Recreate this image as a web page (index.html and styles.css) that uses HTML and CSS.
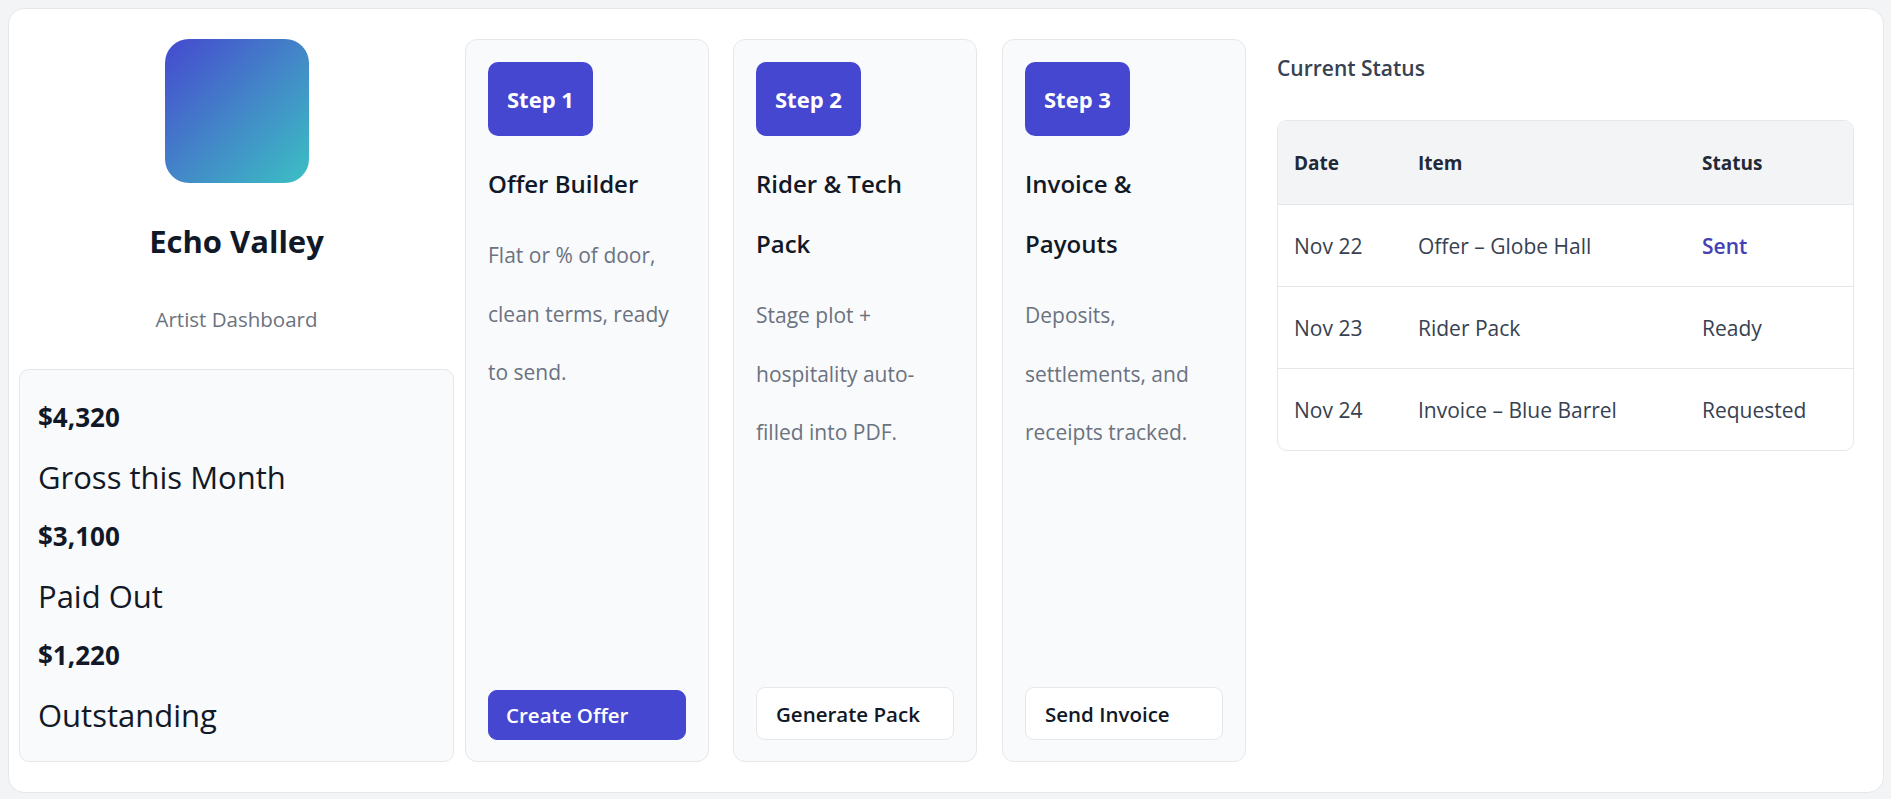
FILE: index.html
```html
<!DOCTYPE html>
<html lang="en">
<head>
<meta charset="utf-8">
<title>Echo Valley – Artist Dashboard</title>
<link rel="stylesheet" href="styles.css">
</head>
<body>
<main class="shell">
  <aside class="sidebar">
    <div class="logo"></div>
    <h1 class="artist">Echo Valley</h1>
    <p class="subtitle">Artist Dashboard</p>
    <div class="stats">
      <div class="stat-value">$4,320</div>
      <div class="stat-label">Gross this Month</div>
      <div class="stat-value">$3,100</div>
      <div class="stat-label">Paid Out</div>
      <div class="stat-value">$1,220</div>
      <div class="stat-label">Outstanding</div>
    </div>
  </aside>

  <section class="steps">
    <article class="step">
      <span class="badge">Step 1</span>
      <h3 class="step-title">Offer Builder</h3>
      <p class="step-desc">Flat or % of door, clean terms, ready to send.</p>
      <button class="btn btn-primary">Create Offer</button>
    </article>
    <article class="step">
      <span class="badge">Step 2</span>
      <h3 class="step-title">Rider &amp; Tech Pack</h3>
      <p class="step-desc">Stage plot + hospitality auto-filled into PDF.</p>
      <button class="btn btn-outline">Generate Pack</button>
    </article>
    <article class="step">
      <span class="badge">Step 3</span>
      <h3 class="step-title">Invoice &amp; Payouts</h3>
      <p class="step-desc">Deposits, settlements, and receipts tracked.</p>
      <button class="btn btn-outline">Send Invoice</button>
    </article>
  </section>

  <section class="status">
    <h2 class="status-title">Current Status</h2>
    <div class="table-wrap">
      <table class="status-table">
        <colgroup>
          <col class="col-date">
          <col class="col-item">
          <col class="col-status">
        </colgroup>
        <thead>
          <tr><th>Date</th><th>Item</th><th>Status</th></tr>
        </thead>
        <tbody>
          <tr><td>Nov 22</td><td>Offer – Globe Hall</td><td class="sent">Sent</td></tr>
          <tr><td>Nov 23</td><td>Rider Pack</td><td>Ready</td></tr>
          <tr><td>Nov 24</td><td>Invoice – Blue Barrel</td><td>Requested</td></tr>
        </tbody>
      </table>
    </div>
  </section>
</main>
</body>
</html>
```

FILE: styles.css
```css
* { box-sizing: border-box; }

html, body { height: 100%; }

body {
  margin: 8px 7px 0 8px;
  background: #f3f4f6;
  font-family: "Open Sans", "Noto Sans", "DejaVu Sans", sans-serif;
  color: #111827;
}

.shell {
  display: flex;
  align-items: stretch;
  background: #ffffff;
  border: 1px solid #e5e7eb;
  border-radius: 16px;
  padding: 30px 29px 30px 10px;
  height: 785px;
}

/* Sidebar */
.sidebar {
  width: 435px;
  flex: 0 0 435px;
  display: flex;
  flex-direction: column;
  align-items: center;
}

.logo {
  width: 144px;
  height: 144px;
  border-radius: 24px;
  background: linear-gradient(135deg, #4549cf 0%, #4385c8 50%, #3bc0c4 100%);
}

.artist {
  margin: 34px 0 0;
  font-size: 31px;
  line-height: 48px;
  font-weight: 700;
  color: #111827;
}

.subtitle {
  margin: 38px 0 0;
  font-size: 20.5px;
  line-height: 33px;
  color: #6b7280;
}

.stats {
  margin-top: auto;
  align-self: stretch;
  background: #f9fafb;
  border: 1px solid #e5e7eb;
  border-radius: 10px;
  padding: 18px 18px 16px;
}

.stat-value {
  font-size: 26px;
  font-weight: 700;
  line-height: 59.5px;
  color: #111827;
}

.stat-label {
  font-size: 31px;
  line-height: 59.5px;
  color: #111827;
}

/* Steps */
.steps {
  display: flex;
  margin-left: 11px;
}

.step {
  width: 244px;
  flex: 0 0 244px;
  display: flex;
  flex-direction: column;
  align-items: flex-start;
  background: #f9fafb;
  border: 1px solid #e5e7eb;
  border-radius: 12px;
  padding: 22px 22px 21px;
}

.step + .step { margin-left: 24px; }
.step:last-child { margin-left: 25px; }

.badge {
  display: inline-block;
  background: #4547d1;
  color: #ffffff;
  font-weight: 700;
  font-size: 22px;
  line-height: 38px;
  padding: 18px 19px;
  border-radius: 10px;
}

.step-title {
  margin: 18px 0 0;
  font-size: 24px;
  font-weight: 600;
  line-height: 60px;
  color: #111827;
}

.step-desc {
  margin: 12px 0 0;
  font-size: 21px;
  line-height: 58.5px;
  color: #6b7280;
}

.btn {
  margin-top: auto;
  width: 100%;
  text-align: left;
  font-family: inherit;
  font-size: 20.5px;
  font-weight: 600;
  border-radius: 9px;
  cursor: pointer;
}

.btn-primary {
  background: #4547d1;
  color: #ffffff;
  border: 1px solid #4547d1;
  height: 50px;
  padding: 0 17px;
}

.btn-outline {
  background: #ffffff;
  color: #111827;
  border: 1px solid #e5e7eb;
  height: 53px;
  padding: 0 19px;
}

/* Status */
.status {
  flex: 1 1 auto;
  margin-left: 31px;
}

.status-title {
  margin: 13px 0 0;
  font-size: 21px;
  font-weight: 600;
  line-height: 33px;
  color: #374151;
}

.table-wrap {
  margin-top: 35px;
  border: 1px solid #e5e7eb;
  border-radius: 10px;
  overflow: hidden;
}

.status-table {
  width: 100%;
  border-collapse: separate;
  border-spacing: 0;
  table-layout: fixed;
}

.col-date { width: 124px; }
.col-item { width: 284px; }

.status-table th {
  background: #f3f4f6;
  text-align: left;
  font-size: 19px;
  font-weight: 700;
  color: #1f2937;
  height: 83px;
  padding: 0 16px;
  line-height: 30px;
}

.status-table td {
  border-top: 1px solid #e5e7eb;
  font-size: 21px;
  color: #374151;
  height: 82px;
  padding: 0 16px;
  line-height: 32px;
}

.status-table td.sent {
  color: #4541b5;
  font-weight: 600;
}
```
